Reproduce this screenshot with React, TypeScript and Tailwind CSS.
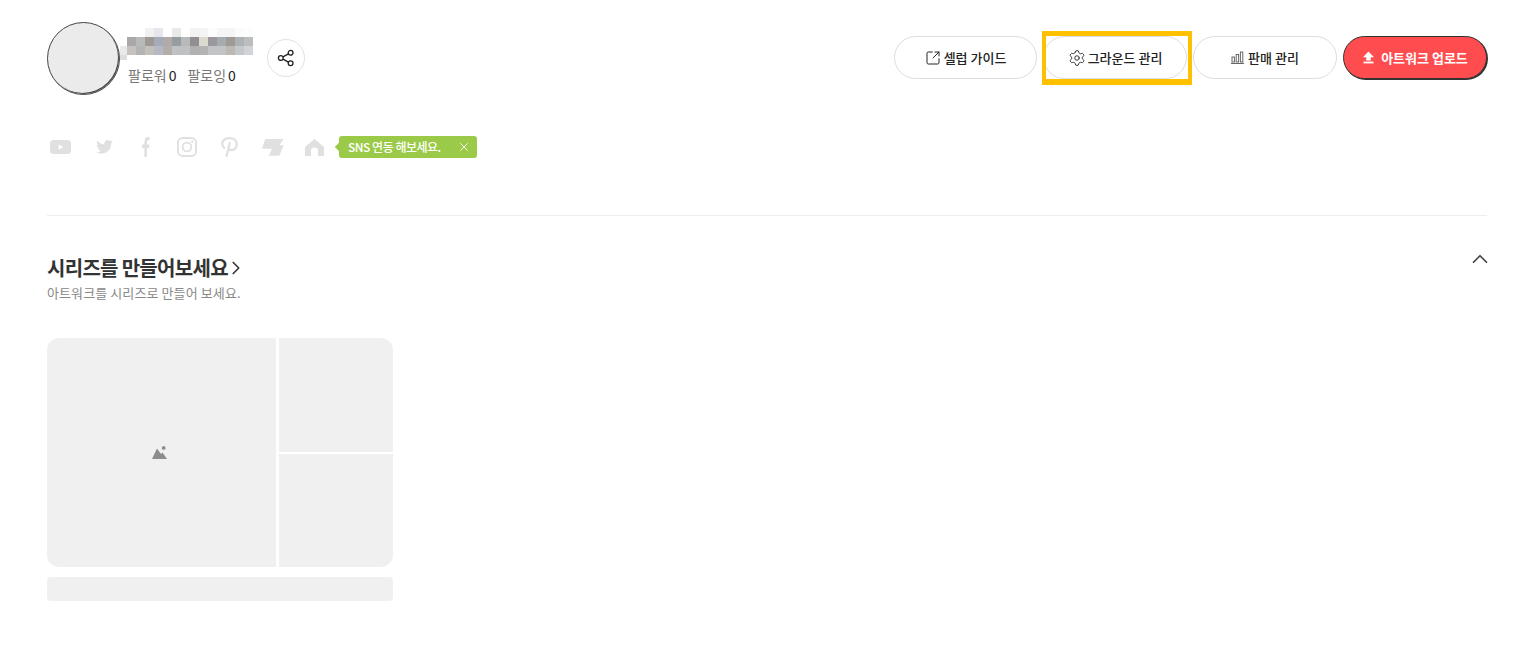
import { ChevronRight, ChevronUp, Settings, SquareArrowOutUpRight, X } from 'lucide-react'

const MOSAIC = [
  ['#ffffff', '#ffffff', '#f1f1f1', '#e6e7ec', '#ffffff', '#e8eaea', '#ffffff', '#f3f3f3', '#f4f4f4', '#fcfcfc', '#f6f6f6', '#f6f5f5', '#fbfbfb', '#fcfdfd'],
  ['#a9a9a9', '#b8b9b9', '#9d9a96', '#a6abb9', '#b0aaa8', '#959da3', '#b8baba', '#918f92', '#dcd9d1', '#9c999e', '#a5abb0', '#a09a96', '#adb2b6', '#bcbdbe'],
  ['#c5c1bc', '#b4b4b6', '#c2c0bb', '#b6b9c4', '#b4aeaa', '#bfc1c4', '#bfc0c1', '#b1b1b1', '#b3b3b1', '#c2c3c6', '#c1c3c5', '#bcb8b2', '#c5c8cb', '#d2d3d8'],
]

const Mosaic = () => (
  <svg width="133" height="33" viewBox="0 0 133 33" className="block">
    <rect x="0" y="18" width="7" height="9" fill="#e9e9e9" />
    <rect x="0" y="27" width="7" height="5" fill="#dddddd" />
    {MOSAIC.map((row, y) =>
      row.map((color, x) => <rect key={`${x}-${y}`} x={7 + x * 9} y={y * 9} width="9" height="9" fill={color} />),
    )}
  </svg>
)

const ShareIcon = () => (
  <svg width="18" height="18" viewBox="0 0 18 18" fill="none" stroke="#222" strokeWidth="1.3">
    <circle cx="3.8" cy="9" r="2.4" />
    <circle cx="13.6" cy="3.8" r="2.4" />
    <circle cx="13.6" cy="14.2" r="2.4" />
    <path d="M6 7.9l5.4-3M6 10.1l5.4 3" />
  </svg>
)

const ChartIcon = () => (
  <svg width="13" height="13" viewBox="0 0 13 13" fill="none" stroke="#666" strokeWidth="1">
    <rect x="1" y="6" width="2.4" height="5" />
    <rect x="5.2" y="3.5" width="2.4" height="7.5" />
    <rect x="9.4" y="1" width="2.4" height="10" />
    <path d="M0 12.5h13" />
  </svg>
)

const UploadIcon = () => (
  <svg width="13" height="13" viewBox="0 0 13 13" fill="#fff">
    <path d="M6.5 0.5L12 6.2H8.8V9.4H4.2V6.2H1Z" />
    <rect x="1.5" y="10.6" width="10" height="1.8" />
  </svg>
)

const SnsIcons = () => (
  <div className="flex items-center text-[#e0e0e0]">
    <svg width="21" height="14" viewBox="0 0 22 16" preserveAspectRatio="none" fill="currentColor">
      <path fillRule="evenodd" d="M4 0h14a4 4 0 0 1 4 4v8a4 4 0 0 1-4 4H4a4 4 0 0 1-4-4V4a4 4 0 0 1 4-4zM9 5v6l5-3z" />
    </svg>
    <svg width="17" height="14" viewBox="0 0 24 20" fill="currentColor" className="ml-[25px]">
      <path d="M24 2.4c-.9.4-1.8.7-2.8.8 1-.6 1.800-1.600 2.200-2.700-1 .6-2 1-3.100 1.200A4.900 4.900 0 0 0 11.900 6.200C7.800 6 4.200 4 1.700.9c-1.300 2.300-.6 5.100 1.500 6.600-.8 0-1.600-.2-2.200-.6 0 2.400 1.700 4.400 3.900 4.900-.7.200-1.500.2-2.200.1.600 2 2.400 3.400 4.600 3.400A9.900 9.900 0 0 1 0 17.300 14 14 0 0 0 7.500 19.500c9.100 0 14.300-7.700 14-14.600 1-.7 1.800-1.500 2.500-2.500z" />
    </svg>
    <svg width="8" height="20" viewBox="0 0 10 19" preserveAspectRatio="none" fill="currentColor" className="ml-[29px]">
      <path d="M3 19V10.500H0V7.200h3V4.600C3 1.700 4.700 0 7.300 0c1 0 1.900.1 2.200.1v3H7.900C6.500 3.100 6.200 3.800 6.200 4.800v2.400h3.200l-.4 3.300H6.200V19z" />
    </svg>
    <svg width="20" height="20" viewBox="0 0 21 21" fill="none" stroke="currentColor" strokeWidth="2" className="ml-[27px]">
      <rect x="1" y="1" width="19" height="19" rx="5" />
      <circle cx="10.500" cy="10.500" r="4.600" />
      <circle cx="16" cy="5" r="1.200" fill="currentColor" stroke="none" />
    </svg>
    <svg width="19" height="20" viewBox="0 0 18 21" fill="none" stroke="currentColor" strokeWidth="2.400" strokeLinecap="round" className="ml-[23px]">
      <path d="M3.300 11.500C1.800 10.200 1.300 8.700 1.300 7.200 1.300 3.700 4.700 1.200 8.800 1.200c4.200 0 7.800 2.300 7.800 6.200 0 3.700-2.400 6.400-5.400 6.400-1.400 0-2.500-.6-3-1.600M9.200 6.500L6 19.800" />
    </svg>
    <svg width="22" height="17" viewBox="0 0 22 17" fill="currentColor" className="ml-[23px]">
      <path d="M3.300 0H21.700L17.300 6.300H21.700L17.300 16.700H6.700L10 9.700H0z" />
    </svg>
    <svg width="19" height="17" viewBox="0 0 19 18" preserveAspectRatio="none" fill="currentColor" className="ml-[21px]">
      <path d="M9.500 0L19 8.500V18h-6v-5.500a3.500 3.500 0 0 0-7 0V18H0V8.500z" />
    </svg>
  </div>
)

const PictureIcon = () => (
  <svg width="16" height="14" viewBox="0 0 16 14" fill="#8c8c8c" className="mr-[3px]">
    <path d="M5 2.500L9 8 10.500 6.500 15 13H0z" />
    <circle cx="11.700" cy="1.900" r="1.900" />
  </svg>
)

export default function App() {
  return (
    <div className="min-h-[665px] bg-white pl-[47px] pr-[40px] font-['Noto_Sans_CJK_KR','Noto_Sans',sans-serif] text-[#222]">
      {/* Profile header */}
      <div className="flex items-start justify-between pt-[22px]">
        <div className="flex items-start">
          <div className="h-[73px] w-[73px] shrink-0 rounded-full border border-[#444] bg-[#ebebeb] shadow-[inset_-1px_-1px_0_#444]" />
          <div className="mt-[6px] flex flex-col">
            <Mosaic />
            <div className="mt-[4px] flex pl-[8px] text-[14px] leading-[20px] text-[#777]">
              <span>팔로워</span>
              <span className="ml-[2px] text-[#222]">0</span>
              <span className="ml-[11px]">팔로잉</span>
              <span className="ml-[2px] text-[#222]">0</span>
            </div>
          </div>
          <button className="ml-[14px] mt-[17px] flex h-[38px] w-[38px] items-center justify-center rounded-full border border-[#e2e2e2] bg-white">
            <ShareIcon />
          </button>
        </div>

        <div className="mt-[14px] flex gap-[6px]">
          <button className="flex h-[43px] w-[143px] items-center justify-center gap-[3px] rounded-full border border-[#ddd] bg-white text-[13px] font-medium">
            <SquareArrowOutUpRight size={16} strokeWidth={1.5} />
            셀럽 가이드
          </button>
          <div className="relative">
            <button className="flex h-[43px] w-[144px] items-center justify-center gap-[2px] rounded-full border border-[#ddd] bg-white text-[13px] font-medium">
              <Settings size={18} strokeWidth={1.2} />
              그라운드 관리
            </button>
            {/* Highlight frame */}
            <div className="absolute -bottom-[6px] -left-[1px] -right-[5px] -top-[5px] border-x-[4px] border-b-[6px] border-t-[5px] border-[#ffc000]" />
          </div>
          <button className="flex h-[43px] w-[144px] items-center justify-center gap-[4px] rounded-full border border-[#ddd] bg-white text-[13px] font-medium">
            <ChartIcon />
            판매 관리
          </button>
          <button className="flex h-[43px] w-[144px] items-center justify-center gap-[6px] rounded-full border border-[#333] bg-[#ff4d4f] text-[13px] font-bold text-white shadow-[1px_1px_0_#333]">
            <UploadIcon />
            아트워크 업로드
          </button>
        </div>
      </div>

      {/* SNS links */}
      <div className="mt-[41px] flex items-center pl-[3px]">
        <SnsIcons />
        <div className="relative ml-[15px] flex h-[22px] w-[138px] items-center justify-between rounded-[3px] bg-[#9aca47] pl-[9px] pr-[6px] text-[12px] font-medium tracking-[-0.5px] text-white">
          <span className="absolute -left-[3px] top-[8px] h-[6px] w-[6px] rotate-45 bg-[#9aca47]" />
          SNS 연동 해보세요.
          <X size={14} strokeWidth={1.5} />
        </div>
      </div>

      <div className="mt-[57px] border-t border-[#eeeeee]" />

      {/* Series */}
      <div className="mt-[37px] flex items-start justify-between">
        <div>
          <h2 className="flex h-[30px] items-center text-[20px] font-bold tracking-[-0.7px] text-[#333]">
            시리즈를 만들어보세요
            <ChevronRight size={22} strokeWidth={1.8} className="-ml-[3px]" />
          </h2>
          <p className="text-[13px] leading-[20px] tracking-[0.1px] text-[#888]">아트워크를 시리즈로 만들어 보세요.</p>
        </div>
        <ChevronUp size={26} strokeWidth={1.6} className="-mr-[5.5px] -mt-[7px] text-[#444]" />
      </div>

      <div className="mt-[35px] w-[346px]">
        <div className="flex h-[229px] gap-[3px] overflow-hidden rounded-[12px]">
          <div className="flex w-[229px] items-center justify-center bg-[#f0f0f0]">
            <PictureIcon />
          </div>
          <div className="flex flex-1 flex-col gap-[2px]">
            <div className="flex-1 bg-[#f0f0f0]" />
            <div className="flex-1 bg-[#f0f0f0]" />
          </div>
        </div>
        <div className="mt-[10px] h-[24px] rounded-[4px] bg-[#f0f0f0]" />
      </div>
    </div>
  )
}
